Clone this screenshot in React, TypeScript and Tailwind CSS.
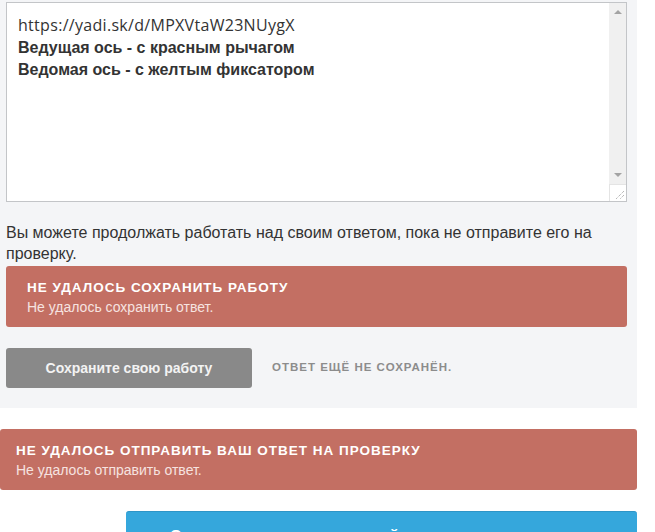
export default function App() {
  return (
    <div className="w-[655px] h-[532px] overflow-hidden bg-white font-['Liberation_Sans',Arial,sans-serif] text-[#333]">
      <div className="w-[637px] bg-[#f4f5f7] pl-[6px] pr-[10px] pt-[2px] pb-[20px]">
        <div className="flex h-[200px] border border-[#c3c5c8] bg-white">
          <div className="flex-1 pl-[11px] pt-[11px] text-[16px] leading-[22.5px]">
            <p className="font-['Open_Sans',sans-serif] tracking-[0.3px] text-[#333]">https://yadi.sk/d/MPXVtaW23NUygX</p>
            <p className="font-bold">Ведущая ось - с красным рычагом</p>
            <p className="font-bold">Ведомая ось - с желтым фиксатором</p>
          </div>
          <div className="flex w-[17px] flex-col bg-[#f0f0f0]">
            <div className="flex h-[17px] items-center justify-center">
              <svg width="8" height="5" viewBox="0 0 8 5">
                <path d="M0 5 L4 1 L8 5 Z" fill="#a3a3a3" />
              </svg>
            </div>
            <div className="flex-1" />
            <div className="flex h-[17px] items-center justify-center">
              <svg width="8" height="5" viewBox="0 0 8 5">
                <path d="M0 0 L8 0 L4 4 Z" fill="#a3a3a3" />
              </svg>
            </div>
            <div className="relative h-[17px] border-l border-t border-[#e4e4e4] bg-white">
              <svg className="absolute bottom-[2px] right-[2px]" width="9" height="9" viewBox="0 0 9 9">
                <path d="M9 1 L1 9 M9 5 L5 9" stroke="#999" strokeWidth="1" strokeDasharray="1 1" />
              </svg>
            </div>
          </div>
        </div>

        <p className="mt-[20px] text-[16px] leading-[21px] text-[#333]">
          Вы можете продолжать работать над своим ответом, пока не отправите его на проверку.
        </p>

        <div className="mt-[2px] rounded-[3px] bg-[#c36f63] px-[21px] pt-[13px] pb-[10px] text-white">
          <p className="text-[13.5px] font-bold uppercase leading-[18px] tracking-[1px]">Не удалось сохранить работу</p>
          <p className="text-[14px] leading-[20px] text-[#f6e3e0]">Не удалось сохранить ответ.</p>
        </div>

        <div className="mt-[21px] flex items-center">
          <div className="flex h-[40px] w-[246px] items-center justify-center rounded-[3px] bg-[#898989] text-[14px] font-bold text-[#f3f3f3]">
            Сохраните свою работу
          </div>
          <span className="ml-[20px] text-[11.5px] font-bold uppercase tracking-[1px] text-[#8c8c8c]">
            Ответ ещё не сохранён.
          </span>
        </div>
      </div>

      <div className="mt-[21px] w-[637px] rounded-[3px] bg-[#c36f63] px-[16px] pt-[13px] pb-[10px] text-white">
        <p className="text-[13.5px] font-bold uppercase leading-[18px] tracking-[1px]">Не удалось отправить ваш ответ на проверку</p>
        <p className="text-[14px] leading-[20px] text-[#f6e3e0]">Не удалось отправить ответ.</p>
      </div>

      <div className="ml-[126px] mt-[21px] h-[40px] w-[511px] rounded-[3px] border-t border-[#2e95c7] bg-[#35a7dc] pl-[44px] pt-[14px] text-[15px] font-bold leading-[18px] text-white">
        Окончательно отправить свой ответ на проверку
      </div>
    </div>
  );
}
